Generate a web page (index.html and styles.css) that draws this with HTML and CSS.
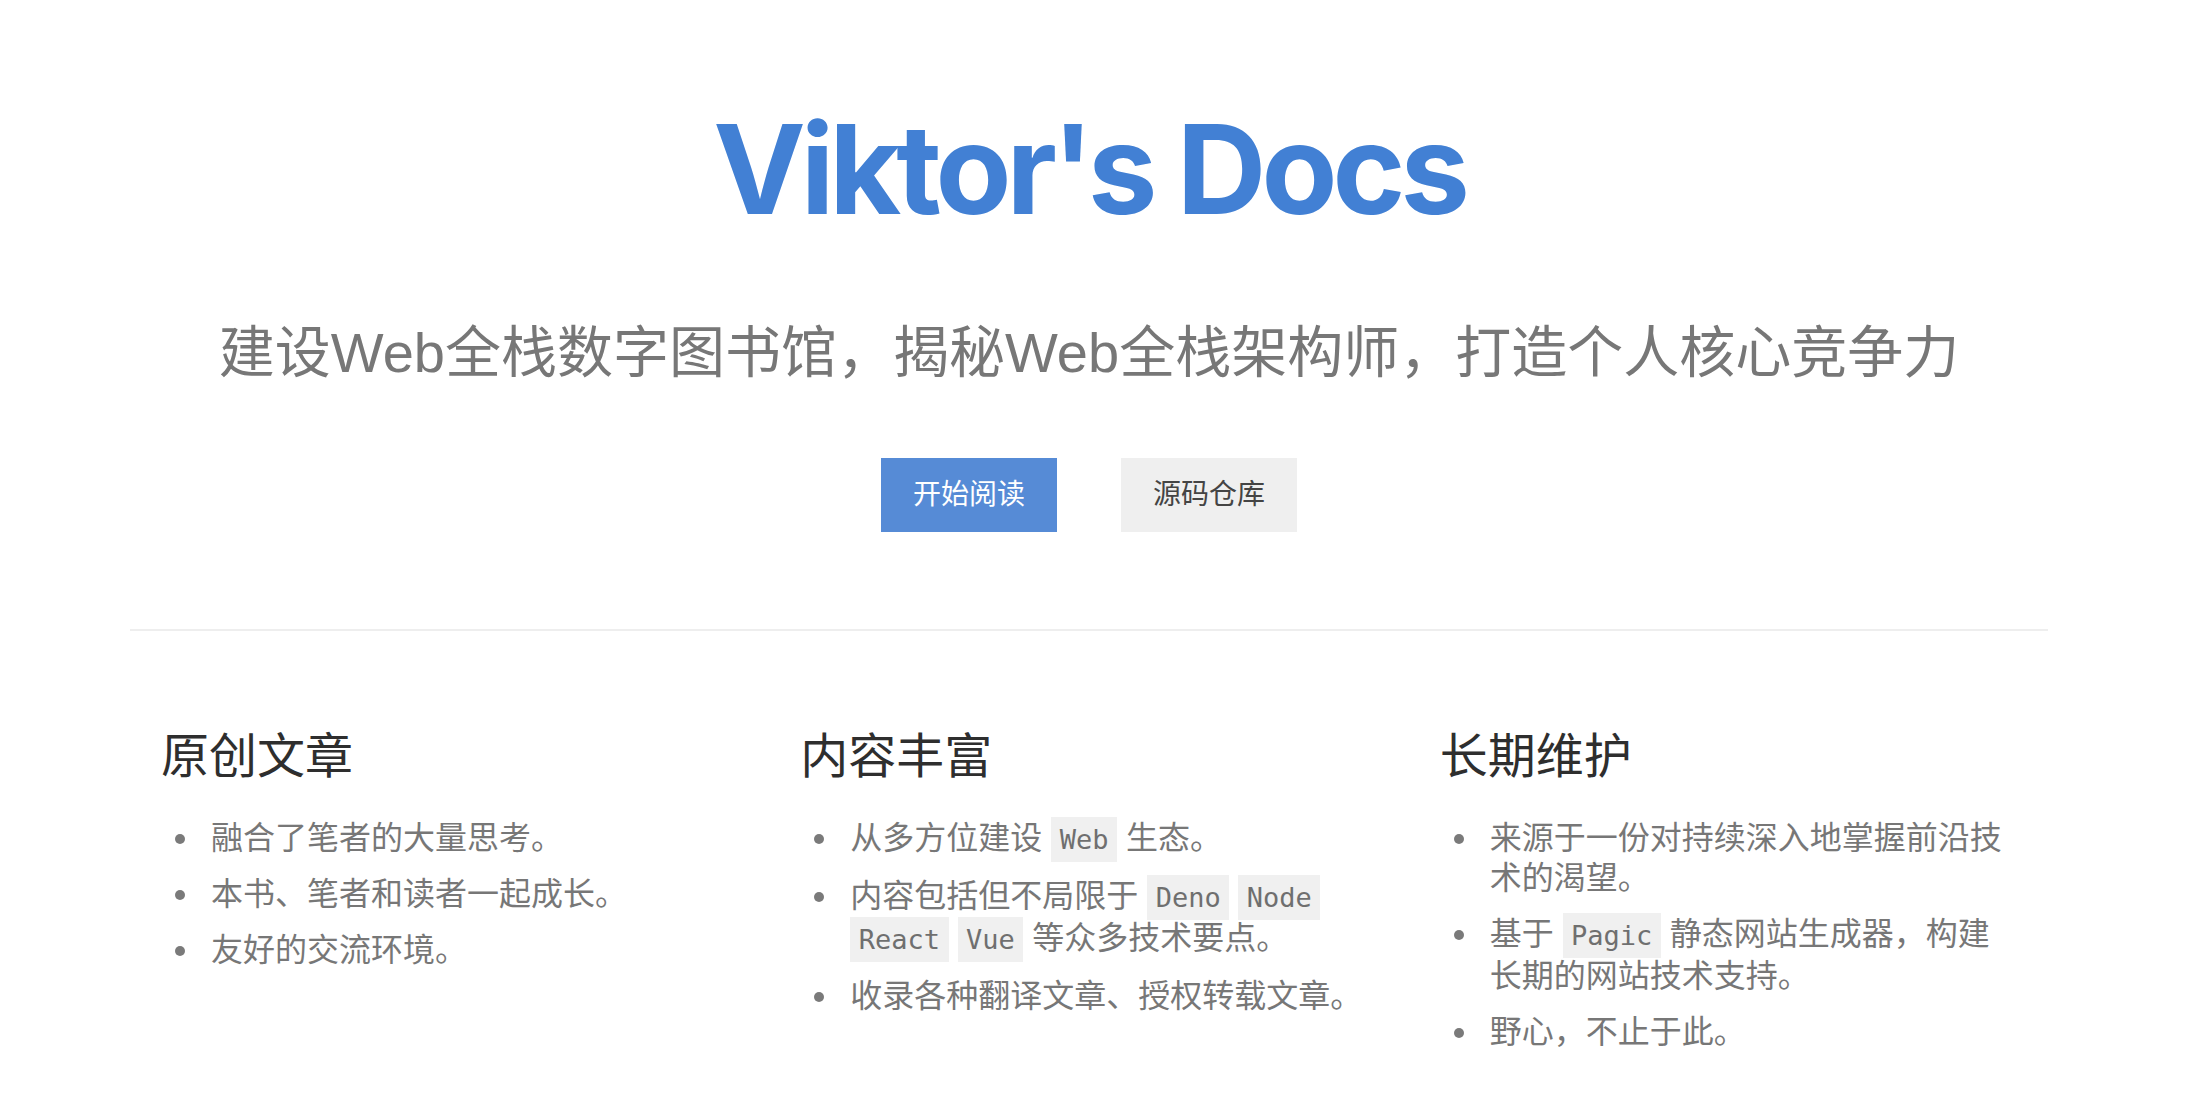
FILE: index.html
```html
<!DOCTYPE html>
<html lang="zh-CN">
<head>
<meta charset="utf-8">
<title>Viktor's Docs</title>
<link rel="stylesheet" href="styles.css">
</head>
<body>
<div class="page">
  <header class="hero">
    <h1 class="title">Viktor's Docs</h1>
    <p class="tagline">建设Web全栈数字图书馆，揭秘Web全栈架构师，打造个人核心竞争力</p>
    <div class="actions">
      <a class="btn btn-primary" href="#">开始阅读</a>
      <a class="btn btn-secondary" href="#">源码仓库</a>
    </div>
  </header>
  <hr class="divider">
  <section class="features">
    <div class="feature">
      <h2 class="feature-title">原创文章</h2>
      <ul class="feature-list">
        <li>融合了笔者的大量思考。</li>
        <li>本书、笔者和读者一起成长。</li>
        <li>友好的交流环境。</li>
      </ul>
    </div>
    <div class="feature">
      <h2 class="feature-title">内容丰富</h2>
      <ul class="feature-list">
        <li>从多方位建设 <code>Web</code> 生态。</li>
        <li>内容包括但不局限于 <code>Deno</code> <code>Node</code> <code>React</code> <code>Vue</code> 等众多技术要点。</li>
        <li>收录各种翻译文章、授权转载文章。</li>
      </ul>
    </div>
    <div class="feature">
      <h2 class="feature-title">长期维护</h2>
      <ul class="feature-list">
        <li>来源于一份对持续深入地掌握前沿技术的渴望。</li>
        <li>基于 <code>Pagic</code> 静态网站生成器，构建长期的网站技术支持。</li>
        <li>野心，不止于此。</li>
      </ul>
    </div>
  </section>
</div>
</body>
</html>
```

FILE: styles.css
```css
html, body {
  margin: 0;
  padding: 0;
  background: #ffffff;
}

body {
  font-family: "Liberation Sans", "Noto Sans CJK SC", sans-serif;
  color: #333333;
}

.page {
  padding: 94px 8px 40px 0;
}

.hero {
  text-align: center;
}

.title {
  margin: 0;
  font-family: "Inter", "Liberation Sans", sans-serif;
  font-weight: 700;
  font-size: 124px;
  line-height: 150px;
  letter-spacing: -5px;
  color: #4280d4;
}

.tagline {
  margin: 71px 0 0;
  font-size: 56px;
  line-height: 76px;
  color: #777777;
}

.actions {
  margin-top: 67px;
  display: flex;
  justify-content: center;
  gap: 64px;
}

.btn {
  display: block;
  height: 74px;
  padding: 0 32px;
  font-size: 28px;
  line-height: 74px;
  text-decoration: none;
}

.btn-primary {
  background: #568bd6;
  color: #ffffff;
}

.btn-secondary {
  background: #efefef;
  color: #444444;
}

.divider {
  width: 1918px;
  margin: 97px auto 0;
  border: 0;
  height: 2px;
  background: #eeeeee;
}

.features {
  width: 1918px;
  margin: 98px auto 0;
  display: grid;
  grid-template-columns: repeat(3, 1fr);
}

.feature {
  padding: 0 40px 0 31px;
}

.feature-title {
  margin: 0;
  font-size: 48px;
  line-height: 56px;
  font-weight: 400;
  color: #2e2e2e;
}

.feature-list {
  margin: 33px 0 0;
  padding-left: 50px;
  list-style: none;
  font-size: 32px;
  line-height: 40px;
  color: #777777;
}

.feature-list li::before {
  content: "";
  display: inline-block;
  width: 10px;
  height: 10px;
  margin-left: -36px;
  margin-right: 26px;
  border-radius: 50%;
  background: #7a7a7a;
  vertical-align: 5px;
}

.feature-list li + li {
  margin-top: 16px;
}

.feature-list code {
  font-family: "DejaVu Sans Mono", monospace;
  font-size: 27px;
  padding: 7px 8.5px;
  background: #f0f0f0;
  color: #6f6f6f;
}
```
